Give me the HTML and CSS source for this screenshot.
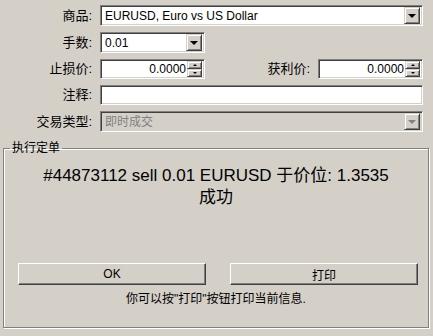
FILE: index.html
```html
<!DOCTYPE html>
<html>
<head>
<meta charset="utf-8">
<link rel="stylesheet" href="styles.css">
</head>
<body>
<div class="dialog">
  <div class="form">
    <label class="lbl">商品:</label>
    <div class="combo span3">
      <span class="val">EURUSD, Euro vs US Dollar</span>
      <span class="dropbtn"><span class="arrow"></span></span>
    </div>

    <label class="lbl">手数:</label>
    <div class="combo">
      <span class="val">0.01</span>
      <span class="dropbtn"><span class="arrow"></span></span>
    </div>
    <div class="filler span2"></div>

    <label class="lbl">止损价:</label>
    <div class="spin">
      <span class="val num">0.0000</span>
      <span class="spinbtns"><span class="sbtn"><span class="up"></span></span><span class="sbtn"><span class="down"></span></span></span>
    </div>
    <label class="lbl">获利价:</label>
    <div class="spin">
      <span class="val num">0.0000</span>
      <span class="spinbtns"><span class="sbtn"><span class="up"></span></span><span class="sbtn"><span class="down"></span></span></span>
    </div>

    <label class="lbl">注释:</label>
    <div class="edit span3"></div>

    <label class="lbl">交易类型:</label>
    <div class="combo span3 disabled">
      <span class="val">即时成交</span>
      <span class="dropbtn"><span class="arrow"></span></span>
    </div>
  </div>

  <fieldset class="group">
    <legend>执行定单</legend>
    <div class="result">#44873112 sell 0.01 EURUSD 于价位: 1.3535</div>
    <div class="result sub">成功</div>
    <div class="buttons">
      <button class="btn">OK</button>
      <button class="btn">打印</button>
    </div>
    <div class="hint">你可以按"打印"按钮打印当前信息.</div>
  </fieldset>
</div>
</body>
</html>
```
FILE: styles.css
```css
html, body {
  margin: 0;
  padding: 0;
  width: 433px;
  height: 336px;
  overflow: hidden;
  background: #d4d0c8;
}
body {
  font-family: "Liberation Sans", "Noto Sans CJK SC", sans-serif;
  font-size: 12px;
  color: #000;
}
.dialog {
  width: 433px;
  height: 336px;
  box-sizing: border-box;
  padding: 5px 0 0 0;
}
.form {
  display: grid;
  grid-template-columns: 100px 105px 113px 105px;
  grid-auto-rows: auto;
  row-gap: 6px;
  padding-right: 10px;
}
.lbl {
  text-align: right;
  padding-right: 8px;
  align-self: center;
  font-size: 13px;
  line-height: 16px;
  white-space: nowrap;
}
.span3 { grid-column: span 3; }
.span2 { grid-column: span 2; }

.combo, .spin, .edit {
  box-sizing: border-box;
  background: #fff;
  border: 1px solid;
  border-color: #808080 #fff #fff #808080;
  box-shadow: inset 1px 1px #404040, inset -1px -1px #d4d0c8;
  display: flex;
  align-items: center;
  padding: 2px;
}
.combo { height: 21px; }
.spin { height: 20px; }
.edit { height: 20px; }
.val {
  flex: 1;
  padding-left: 2px;
  font-size: 12px;
  line-height: 14px;
  white-space: nowrap;
  overflow: hidden;
}
.num { text-align: right; padding-right: 1px; }
.disabled { background: #d4d0c8; }
.disabled .val { color: #808080; }

.dropbtn {
  box-sizing: border-box;
  width: 16px;
  height: 17px;
  border: 1px solid;
  border-color: #d4d0c8 #404040 #404040 #d4d0c8;
  box-shadow: inset 1px 1px #fff, inset -1px -1px #808080;
  background: #d4d0c8;
  display: flex;
  align-items: center;
  justify-content: center;
}
.arrow {
  width: 0;
  height: 0;
  border-left: 4px solid transparent;
  border-right: 4px solid transparent;
  border-top: 4px solid #000;
  margin-top: 1px;
}
.disabled .arrow { border-top-color: #808080; }

.spinbtns {
  display: flex;
  flex-direction: column;
  height: 16px;
}
.sbtn {
  box-sizing: border-box;
  width: 15px;
  height: 8px;
  border: 1px solid;
  border-color: #d4d0c8 #404040 #404040 #d4d0c8;
  box-shadow: inset 1px 1px #fff, inset -1px -1px #808080;
  background: #d4d0c8;
  display: flex;
  align-items: center;
  justify-content: center;
}
.up, .down {
  width: 0;
  height: 0;
  border-left: 2px solid transparent;
  border-right: 2px solid transparent;
}
.up { border-bottom: 2px solid #000; }
.down { border-top: 2px solid #000; }

.group {
  margin: 8px 4px 0 3px;
  padding: 0;
  height: 188px;
  box-sizing: border-box;
  border: 1px solid #808080;
  box-shadow: inset 1px 1px #fff, 1px 1px #fff;
  min-width: 0;
}
.group legend {
  margin-left: 6px;
  padding: 0 2px;
  font-size: 12px;
  line-height: 16px;
}
.result {
  text-align: center;
  font-size: 17px;
  line-height: 22px;
  margin-top: 9px;
}
.result.sub { margin-top: 0; }
.buttons {
  display: flex;
  justify-content: space-between;
  padding: 0 10px 0 14px;
  margin-top: 54px;
}
.btn {
  box-sizing: border-box;
  width: 188px;
  height: 22px;
  border: 1px solid;
  border-color: #fff #404040 #404040 #fff;
  box-shadow: inset -1px -1px #808080;
  background: #d4d0c8;
  font-family: "Liberation Sans", "Noto Sans CJK SC", sans-serif;
  font-size: 12px;
  padding: 0;
  color: #000;
}
.hint {
  text-align: center;
  font-size: 12px;
  line-height: 16px;
  margin-top: 6px;
}
```
